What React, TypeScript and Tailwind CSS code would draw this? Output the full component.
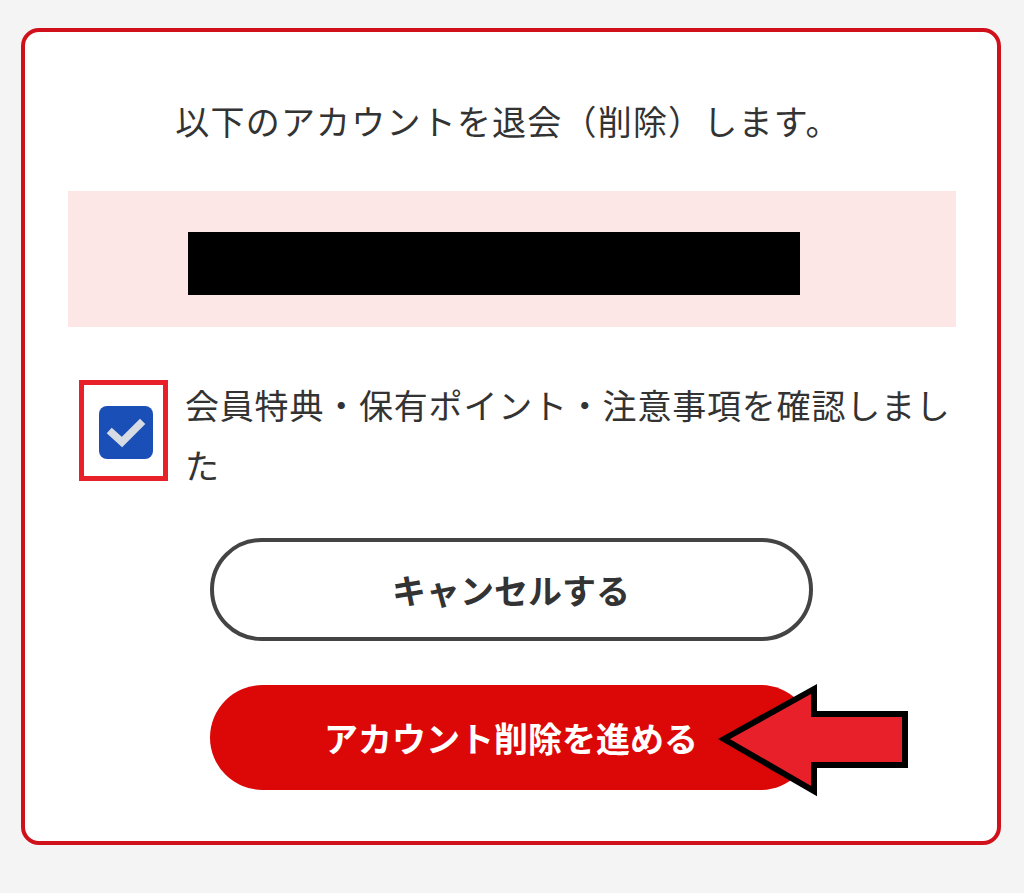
import React from "react";

const font = {
  fontFamily: '"Noto Sans CJK JP", "Noto Sans", sans-serif',
};

function CheckMark() {
  return (
    <svg width="54" height="53" viewBox="0 0 54 53">
      <rect x="0" y="0" width="54" height="53" rx="8" fill="#1b4fb8" />
      <path
        d="M13 27 L23 36 L41 18"
        fill="none"
        stroke="#d6dbe4"
        strokeWidth="7.5"
        strokeLinecap="square"
        strokeLinejoin="miter"
      />
    </svg>
  );
}

function Arrow() {
  // coordinates relative to (715, 680) on the page
  return (
    <svg
      className="absolute left-[690px] top-[648px]"
      width="200"
      height="120"
      viewBox="0 0 200 120"
    >
      <polygon
        points="9,59 99,9 99,34 190,34 190,85 99,85 99,111"
        fill="#e8202a"
        stroke="#000"
        strokeWidth="6"
        strokeLinejoin="miter"
      />
    </svg>
  );
}

export default function App() {
  return (
    <div className="w-[1024px] h-[893px] bg-[#f4f4f4] pt-[28px] pl-[21px]" style={font}>
      <div className="relative w-[980px] h-[817px] bg-white border-4 border-[#d0111b] rounded-[18px] flex flex-col">
        <p className="mt-[63px] text-center text-[34px] leading-[51px] tracking-[1.2px] text-[#333] pr-[6px]">
          以下のアカウントを退会（削除）します。
        </p>

        <div className="mt-[45px] ml-[43px] w-[888px] h-[136px] bg-[#fde6e6] pt-[41px] pl-[120px]">
          <div className="w-[612px] h-[63px] bg-black" />
        </div>

        <div className="mt-[48px] ml-[54px] flex items-start">
          <div className="mt-[5px] w-[89px] h-[101px] border-[5px] border-[#e8202a] bg-white pl-[15px] pt-[21px] shrink-0">
            <CheckMark />
          </div>
          <p className="ml-[17px] w-[775px] text-[34px] leading-[60px] tracking-[0.8px] text-[#333]">
            会員特典・保有ポイント・注意事項を確認しました
          </p>
        </div>

        <button className="mt-[43px] mx-auto w-[603px] h-[103px] rounded-full border-4 border-[#444] bg-white text-[34px] font-bold text-[#333] flex items-center justify-center">
          キャンセルする
        </button>

        <button className="mt-[44px] mx-auto w-[603px] h-[105px] rounded-full bg-[#dc0808] text-[34px] font-bold text-white flex items-center justify-center">
          アカウント削除を進める
        </button>

        <Arrow />
      </div>
    </div>
  );
}
